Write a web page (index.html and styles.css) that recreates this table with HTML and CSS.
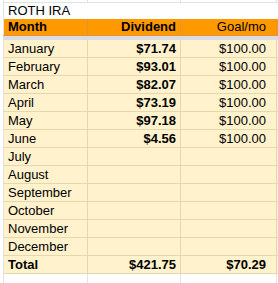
FILE: index.html
```html
<!DOCTYPE html>
<html>
<head>
<meta charset="utf-8">
<link rel="stylesheet" href="styles.css">
</head>
<body>
<div class="sheet">
  <div class="row top"><div class="c"></div><div class="c"></div><div class="c"></div></div>
  <div class="title">ROTH IRA</div>
  <div class="row head"><div class="c">Month</div><div class="c r">Dividend</div><div class="c r g n">Goal/mo</div></div>
  <div class="sep"></div>
  <div class="row data"><div class="c">January</div><div class="c r b">$71.74</div><div class="c r g">$100.00</div></div>
  <div class="row data"><div class="c">February</div><div class="c r b">$93.01</div><div class="c r g">$100.00</div></div>
  <div class="row data"><div class="c">March</div><div class="c r b">$82.07</div><div class="c r g">$100.00</div></div>
  <div class="row data"><div class="c">April</div><div class="c r b">$73.19</div><div class="c r g">$100.00</div></div>
  <div class="row data"><div class="c">May</div><div class="c r b">$97.18</div><div class="c r g">$100.00</div></div>
  <div class="row data"><div class="c">June</div><div class="c r b">$4.56</div><div class="c r g">$100.00</div></div>
  <div class="row data"><div class="c">July</div><div class="c"></div><div class="c"></div></div>
  <div class="row data"><div class="c">August</div><div class="c"></div><div class="c"></div></div>
  <div class="row data"><div class="c">September</div><div class="c"></div><div class="c"></div></div>
  <div class="row data"><div class="c">October</div><div class="c"></div><div class="c"></div></div>
  <div class="row data"><div class="c">November</div><div class="c"></div><div class="c"></div></div>
  <div class="row data"><div class="c">December</div><div class="c"></div><div class="c"></div></div>
  <div class="row data total"><div class="c b">Total</div><div class="c r b">$421.75</div><div class="c r g b">$70.29</div></div>
  <div class="row blank"><div class="c"></div><div class="c"></div><div class="c"></div></div>
</div>
</body>
</html>
```
FILE: styles.css
```css
html, body {
  margin: 0;
  padding: 0;
  background: #ffffff;
}
.sheet {
  width: 278px;
  height: 283px;
  overflow: hidden;
  font-family: "Liberation Sans", Arial, sans-serif;
  font-size: 13px;
  color: #000000;
  padding-left: 3px;
  box-sizing: border-box;
}
.row {
  display: grid;
  grid-template-columns: 84px 93px 96px;
  border-left: 1px solid #e2e3e3;
}
.c {
  border-right: 1px solid #e2e3e3;
  padding: 0 4px;
  white-space: nowrap;
  overflow: hidden;
}
.r { text-align: right; }
.g { padding-right: 10px; }
.b { font-weight: bold; }
.head .n { font-weight: normal; }
.top {
  height: 2px;
  border-bottom: 1px solid #e2e3e3;
}
.title {
  height: 16px;
  line-height: 16px;
  padding-left: 4px;
  border-left: 1px solid #e2e3e3;
}
.head {
  background: #ff9900;
  font-weight: bold;
  height: 16px;
  line-height: 16px;
  border-bottom: 1px solid #e69138;
}
.head .c { border-right-color: #e69138; }
.sep {
  height: 4px;
  background: #dadce0;
}
.data {
  background: #fff2cc;
  height: 17px;
  line-height: 18px;
  border-bottom: 1px solid #e6d7ae;
}
.data .c { border-right-color: #e6d7ae; }
.blank {
  height: 20px;
}
```
